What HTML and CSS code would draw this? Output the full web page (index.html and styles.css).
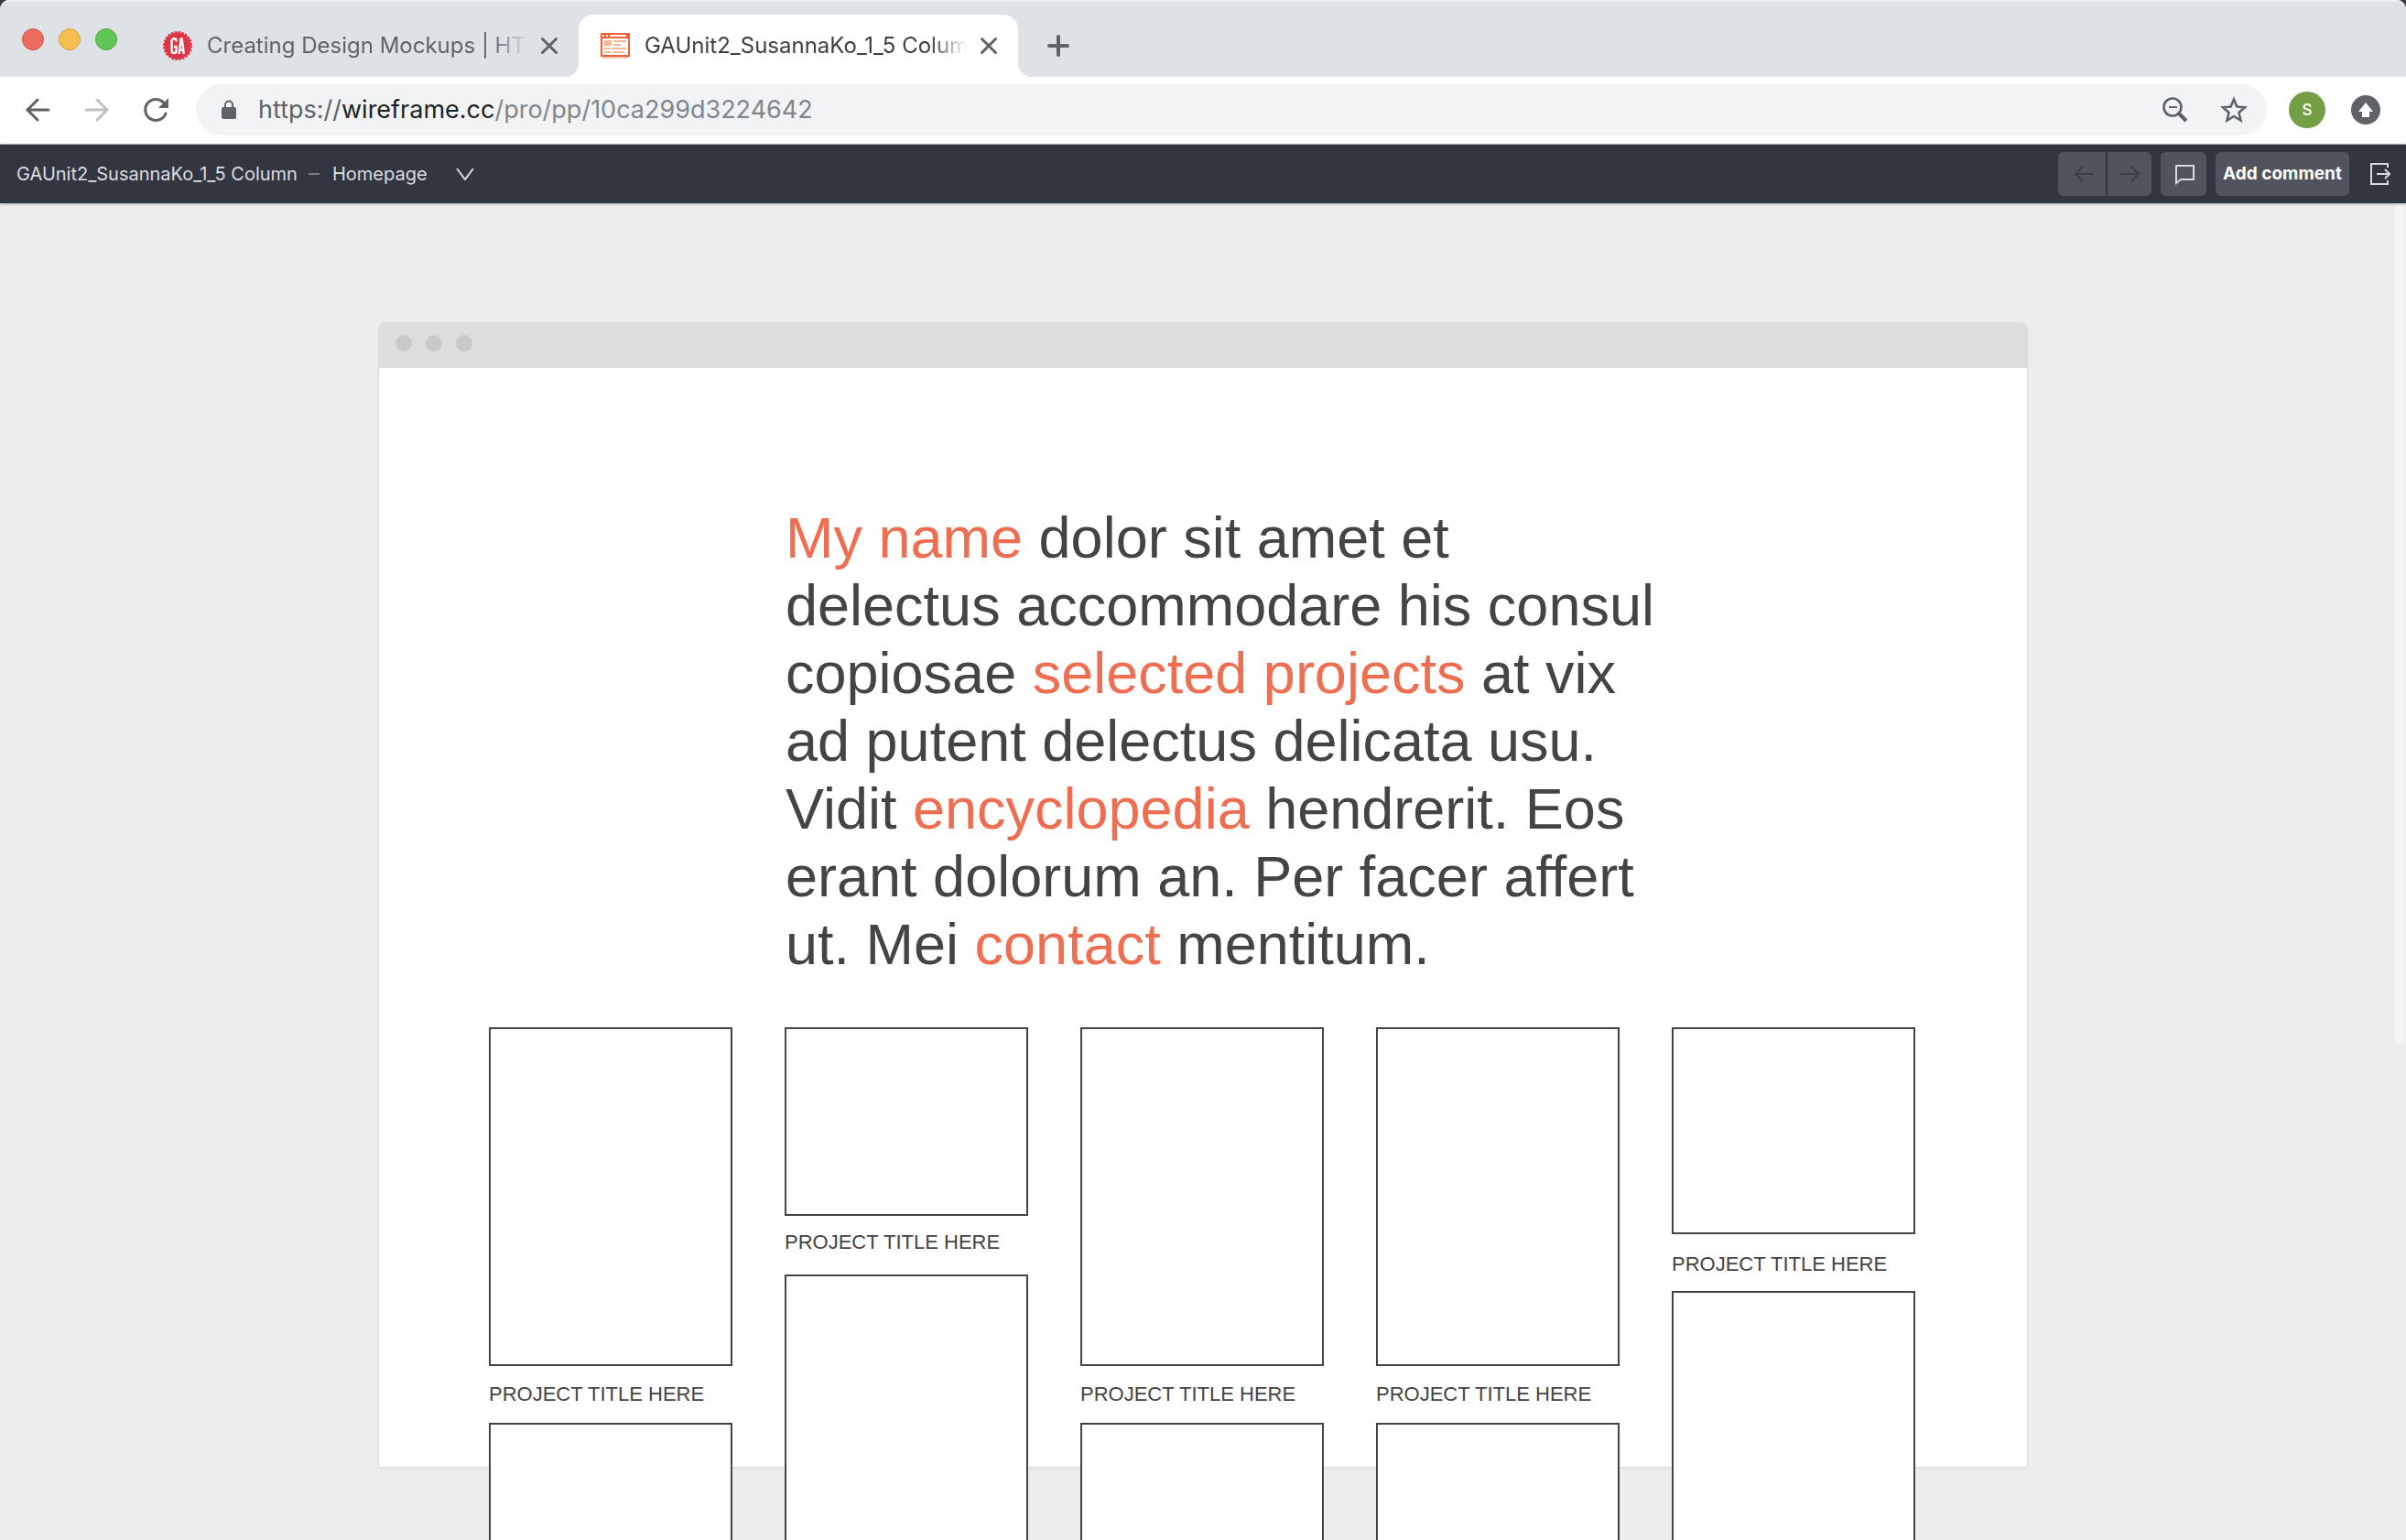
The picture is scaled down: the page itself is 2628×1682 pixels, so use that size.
FILE: index.html
```html
<!DOCTYPE html>
<html lang="en">
<head>
<meta charset="utf-8">
<meta name="viewport" content="width=device-width, initial-scale=1">
<title>GAUnit2_SusannaKo_1_5 Column</title>
<link rel="stylesheet" href="styles.css">
</head>
<body>
<header class="browser">
  <div class="tab-strip">
    <div class="window-buttons">
      <button class="light light-close" aria-label="Close window"></button>
      <button class="light light-min" aria-label="Minimize window"></button>
      <button class="light light-max" aria-label="Zoom window"></button>
    </div>
    <div class="tab">
      <svg class="favicon" viewBox="0 0 32 32" aria-hidden="true">
        <circle cx="16" cy="16" r="14.5" fill="#dc3545"/>
        <circle cx="16" cy="16" r="15" fill="none" stroke="#dc3545" stroke-width="2" stroke-dasharray="2.6 1.33"/>
        <g fill="none" stroke="#fff" stroke-width="2.4">
          <path d="M14.6 11.6V10.4Q14.6 8.2 12.2 8.2Q9.6 8.2 9.6 10.6V21.4Q9.6 24 12 24Q14.6 24 14.6 21.4V17H12"/>
          <path d="M17.6 25L19.7 8.4H20.7L22.8 25M18.4 20.6H22"/>
        </g>
      </svg>
      <span class="tab-title">Creating Design Mockups | HTML</span>
      <button class="tab-close" aria-label="Close tab"><svg viewBox="0 0 16 16"><path d="M2 2L14 14M14 2L2 14"/></svg></button>
    </div>
    <div class="tab tab-active">
      <svg class="favicon" viewBox="0 0 32 32" aria-hidden="true">
        <path d="M0 2H32V28H0Z" fill="#ee6035"/>
        <path d="M2 28H30V30H2Z" fill="#f7c9b6"/>
        <path d="M2 8H30V26H2ZM2 4H4V6H2ZM6 4H8V6H6ZM10 4H28V6H10Z" fill="#fff"/>
        <path d="M4 10H12V16H4ZM14 10H28V12H14ZM14 14H22V16H14ZM4 18H10V20H4ZM12 18H28V20H12ZM4 22H12V24H4ZM14 22H26V24H14Z" fill="#f5b795"/>
      </svg>
      <span class="tab-title">GAUnit2_SusannaKo_1_5 Column</span>
      <button class="tab-close" aria-label="Close tab"><svg viewBox="0 0 16 16"><path d="M2 2L14 14M14 2L2 14"/></svg></button>
    </div>
    <button class="new-tab" aria-label="New tab"><svg viewBox="0 0 24 24"><path d="M12 2V22M2 12H22"/></svg></button>
  </div>
  <div class="address-bar">
    <div class="nav-buttons">
      <button class="nav-button" aria-label="Back"><svg viewBox="0 0 32 32"><path d="M27 16H5M15 5L4 16L15 27"/></svg></button>
      <button class="nav-button nav-off" aria-label="Forward" disabled><svg viewBox="0 0 32 32"><path d="M4 16H26M16 5L27 16L16 27"/></svg></button>
      <button class="nav-button" aria-label="Reload"><svg viewBox="0 0 32 32"><path d="M27 20A11.5 11.5 0 1 1 25 8.5"/><path class="solid" d="M30 3V14H19Z"/></svg></button>
    </div>
    <div class="omnibox">
      <svg class="lock" viewBox="0 0 16 22" aria-hidden="true"><path d="M4 9V5.5A4 4 0 0 1 12 5.5V9" fill="none" stroke="#5f6368" stroke-width="2"/><rect y="8" width="16" height="13" rx="2" fill="#5f6368"/></svg>
      <div class="url" role="textbox" contenteditable="true" spellcheck="false" aria-label="Address"><span class="url-scheme">https://</span><span class="url-host">wireframe.cc</span>/pro/pp/10ca299d3224642</div>
      <button class="box-button" aria-label="Zoom level"><svg viewBox="0 0 32 32"><circle cx="13" cy="13" r="9.5" stroke-width="2.6"/><path d="M9 13H18" stroke-width="2"/><path d="M20 20L28 28" stroke-width="4"/></svg></button>
      <button class="box-button" aria-label="Bookmark this page"><svg viewBox="0 0 32 32"><path d="M16 4.5L19.4 12.6L28 13.3L21.5 19L23.5 27.5L16 23L8.5 27.5L10.5 19L4 13.3L12.6 12.6Z" stroke-width="2.6"/></svg></button>
    </div>
    <button class="avatar" aria-label="Profile">S</button>
    <button class="update" aria-label="Update"><svg viewBox="0 0 32 32"><circle cx="16" cy="16" r="16" fill="#5f6368"/><path d="M16 8L24 18H20V24H12V18H8Z" fill="#fff"/></svg></button>
  </div>
</header>

<nav class="app-bar" aria-label="Wireframe">
  <span>GAUnit2_SusannaKo_1_5 Column</span>
  <span class="dash"></span>
  <button class="page-menu">Homepage <svg viewBox="0 0 20 14" aria-hidden="true"><path d="M1 1L10 13L19 1"/></svg></button>
  <div class="actions">
    <div class="pager">
      <button class="previous" aria-label="Previous page" disabled><svg viewBox="0 0 24 24"><path d="M22 12H3M10 4L2 12L10 20"/></svg></button>
      <button class="next" aria-label="Next page" disabled><svg viewBox="0 0 24 24"><path d="M2 12H21M14 4L22 12L14 20"/></svg></button>
    </div>
    <button class="comments" aria-label="Comments"><svg viewBox="0 0 24 24"><path d="M3 3H22V18H8L3 22Z"/></svg></button>
    <button class="add-comment">Add comment</button>
    <button class="exit" aria-label="Exit"><svg viewBox="0 0 24 24"><path d="M20 5V1H2V23H20V19"/><path d="M8 12H21M17 7L22 12L17 17"/></svg></button>
  </div>
</nav>

<main class="canvas">
  <div class="scroll-thumb"></div>
  <section class="mock">
    <div class="mock-bar"><i class="dot"></i><i class="dot"></i><i class="dot"></i></div>
    <div class="mock-page">
      <p class="intro"><a href="#name">My name</a> dolor sit amet et delectus accommodare his consul copiosae <a href="#projects">selected projects</a> at vix ad putent delectus delicata usu. Vidit <a href="#encyclopedia">encyclopedia</a> hendrerit. Eos erant dolorum an. Per facer affert ut. Mei <a href="#contact">contact</a> mentitum.</p>
      <div class="projects" id="projects">
        <div class="column">
          <div class="box tall"></div>
          <h2 class="title">PROJECT TITLE HERE</h2>
          <div class="box tall"></div>
        </div>
        <div class="column column-short">
          <div class="box short"></div>
          <h2 class="title">PROJECT TITLE HERE</h2>
          <div class="box tall"></div>
        </div>
        <div class="column">
          <div class="box tall"></div>
          <h2 class="title">PROJECT TITLE HERE</h2>
          <div class="box tall"></div>
        </div>
        <div class="column">
          <div class="box tall"></div>
          <h2 class="title">PROJECT TITLE HERE</h2>
          <div class="box tall"></div>
        </div>
        <div class="column column-medium">
          <div class="box medium"></div>
          <h2 class="title">PROJECT TITLE HERE</h2>
          <div class="box tall"></div>
        </div>
      </div>
    </div>
  </section>
</main>
</body>
</html>
```

FILE: styles.css
```css
* { box-sizing: border-box; }

html { background: #3c3c3c; }

body {
  margin: 0;
  height: 100vh;
  display: flex;
  flex-direction: column;
  font-family: Inter, "Liberation Sans", sans-serif;
  border-radius: 10px 10px 0 0;
  overflow: hidden;
}

button {
  margin: 0;
  padding: 0;
  border: 0;
  background: none;
  font: inherit;
  color: inherit;
}

svg { display: block; }

/* Browser frame */
.browser { border-bottom: 1px solid #b4b5b6; background: #fff; }

.tab-strip {
  display: flex;
  align-items: flex-end;
  height: 84px;
  background: #dee1e6;
  border-top: 2px solid #eceef1;
  color: #5f6368;
}

.window-buttons { display: flex; gap: 16px; padding: 0 32px 29px 24px; }
.light { width: 24px; height: 24px; border-radius: 50%; border: 1px solid; }
.light-close { background: #ed6a5e; border-color: #d6564b; }
.light-min { background: #f5bf4f; border-color: #d9a23c; }
.light-max { background: #61c554; border-color: #4da73f; }

.tab {
  position: relative;
  display: flex;
  align-items: center;
  width: 480px;
  height: 68px;
  padding: 0 22px 0 24px;
  border-radius: 16px 16px 0 0;
}
.tab:not(.tab-active) { width: 472px; padding-left: 18px; }
.tab-active { background: #fff; color: #3c4043; }
.tab-active::before,
.tab-active::after {
  content: "";
  position: absolute;
  bottom: 0;
  width: 16px;
  height: 16px;
}
.tab-active::before { right: 100%; background: radial-gradient(circle at 0 0, #dee1e6 16px, #fff 17px); }
.tab-active::after { left: 100%; background: radial-gradient(circle at 100% 0, #dee1e6 16px, #fff 17px); }

.favicon { width: 32px; height: 32px; flex: none; }
.tab-title {
  flex: 1;
  min-width: 0;
  margin: 0 14px 0 16px;
  overflow: hidden;
  white-space: nowrap;
  font-size: 24px;
  line-height: 32px;
  -webkit-mask-image: linear-gradient(to left, transparent, #000 40px);
  mask-image: linear-gradient(to left, transparent, #000 40px);
}
.tab-close svg { width: 20px; height: 20px; fill: none; stroke: #5f6368; stroke-width: 2.4; stroke-linecap: round; }
.new-tab { padding: 0 0 22px 32px; }
.new-tab svg { width: 24px; height: 24px; fill: none; stroke: #5f6368; stroke-width: 4; stroke-linecap: round; }

.address-bar { display: flex; align-items: center; height: 73px; padding: 0 28px 1px 26px; }
.nav-buttons { display: flex; gap: 32px; margin-right: 28px; }
.nav-button svg { width: 32px; height: 32px; fill: none; stroke: #5f6368; stroke-width: 3; stroke-linecap: round; }
.nav-button .solid { fill: #5f6368; stroke: none; }
.nav-off { opacity: .4; }

.omnibox {
  flex: 1;
  display: flex;
  align-items: center;
  height: 56px;
  padding: 0 20px 0 28px;
  border-radius: 28px;
  background: #f1f3f4;
}
.lock { width: 16px; height: 22px; margin-right: 24px; }
.url { flex: 1; font-size: 27px; line-height: 40px; white-space: nowrap; color: #80868b; outline: 0; }
.url-scheme { color: #5f6368; }
.url-host { color: #202124; }
.box-button { margin-left: 32px; }
.box-button svg { width: 32px; height: 32px; fill: none; stroke: #5f6368; }
.avatar {
  width: 40px;
  height: 40px;
  margin: 0 28px 0 24px;
  border-radius: 50%;
  background: #749f47;
  color: #fff;
  font-size: 17px;
  font-weight: 500;
}
.update svg { width: 32px; height: 32px; }

/* Wireframe toolbar */
.app-bar {
  position: relative;
  z-index: 1;
  display: flex;
  align-items: center;
  height: 64px;
  flex: none;
  padding: 0 16px 0 18px;
  background: #323640;
  box-shadow: 0 1px 3px rgba(0, 0, 0, .3);
  color: #dcdde0;
  font-size: 20px;
  line-height: 24px;
}
.dash { width: 12px; height: 2px; margin: 0 14px 0 12px; background: #777a82; }
.page-menu { display: flex; align-items: center; gap: 31px; }
.page-menu svg { width: 20px; height: 14px; fill: none; stroke: #dcdde0; stroke-width: 2; }
.actions { display: flex; align-items: center; gap: 10px; margin-left: auto; }
.pager { display: flex; gap: 2px; border-radius: 6px; overflow: hidden; }
.pager button, .comments, .add-comment {
  display: flex;
  align-items: center;
  justify-content: center;
  height: 48px;
  background: #50545e;
}
.pager .previous { width: 52px; padding-left: 5px; }
.pager .next { width: 48px; }
.comments { width: 50px; padding-left: 2px; }
.comments, .add-comment { border-radius: 6px; }
.actions svg { width: 24px; height: 24px; fill: none; stroke: #d9dadd; stroke-width: 2; }
.pager svg { stroke: #3a3e48; }
.add-comment { width: 146px; color: #fff; font-size: 19px; font-weight: 700; }
.exit { margin-left: 12px; }

/* Drawing area */
.canvas {
  position: relative;
  flex: 1;
  min-height: 0;
  padding: 130px 24px 0;
  overflow: hidden;
  background: #eee;
}
.scroll-thumb {
  position: absolute;
  top: 0;
  right: 2px;
  width: 10px;
  height: 63%;
  border-radius: 0 0 5px 5px;
  background: #f5f5f5;
}
.mock {
  max-width: 1802px;
  margin: 0 auto;
  border: 1px solid #ddd;
  border-radius: 8px 8px 0 0;
  box-shadow: 0 1px 4px rgba(0, 0, 0, .06);
}
.mock-bar {
  display: flex;
  gap: 15px;
  height: 49px;
  padding: 13px 18px;
  border-radius: 7px 7px 0 0;
  background: #ddd;
}
.dot { width: 18px; height: 18px; border-radius: 50%; background: #c9c9c9; }
.mock-page { height: 1200px; padding: 148px 122px 0 120px; background: #fff; }
.intro {
  max-width: 970px;
  margin: 0 0 54px 324px;
  font-family: "Liberation Sans", Arial, sans-serif;
  font-size: 63px;
  line-height: 74px;
  color: #444;
}
.intro a { color: #ee6e52; text-decoration: none; }
.projects { display: flex; justify-content: space-between; gap: 24px; }
.column { flex: 0 1 266px; }
.box { border: 2px solid #444; background: #fff; }
.tall { height: 370px; }
.medium { height: 226px; }
.short { height: 206px; }
.title {
  margin: 0;
  padding: 17px 0;
  font-family: "Liberation Sans", Arial, sans-serif;
  font-size: 22px;
  line-height: 28px;
  font-weight: 400;
  white-space: nowrap;
  color: #444;
}
.column-short .title { padding: 15px 0 21px; }
.column-medium .title { padding: 19px 0 15px; }
```
